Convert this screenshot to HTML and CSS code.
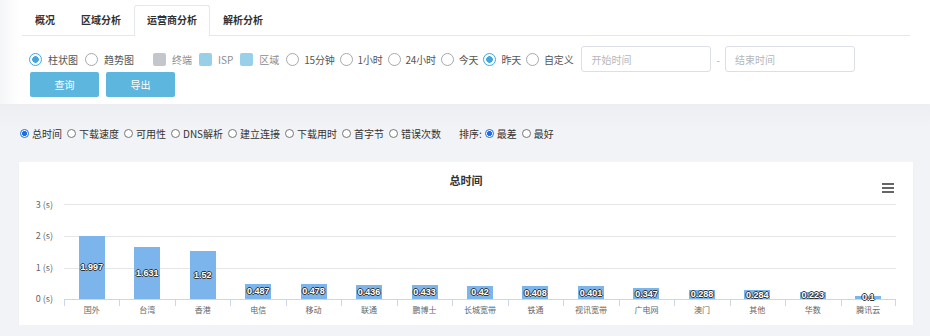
FILE: index.html
```html
<!DOCTYPE html>
<html lang="zh-CN">
<head>
    <meta charset="UTF-8">
    <title>运营商分析</title>
    <link rel="stylesheet" href="styles.css">
</head>
<body>
    <div class="top">
        <div class="tabs">
            <div class="tab">概况</div>
            <div class="tab">区域分析</div>
            <div class="tab active">运营商分析</div>
            <div class="tab">解析分析</div>
        </div>
        <div class="filters">
            <label class="opt"><span class="radio on"></span>柱状图</label>
            <label class="opt"><span class="radio"></span>趋势图</label>
            <label class="opt legend first"><span class="box grey"></span>终端</label>
            <label class="opt legend"><span class="box"></span>ISP</label>
            <label class="opt legend"><span class="box"></span>区域</label>
            <label class="opt time"><span class="radio"></span>15分钟</label>
            <label class="opt time"><span class="radio"></span>1小时</label>
            <label class="opt time"><span class="radio"></span>24小时</label>
            <label class="opt time"><span class="radio"></span>今天</label>
            <label class="opt time"><span class="radio on"></span>昨天</label>
            <label class="opt time last"><span class="radio"></span>自定义</label>
            <input class="date" type="text" placeholder="开始时间">
            <span class="dash">-</span>
            <input class="date" type="text" placeholder="结束时间">
        </div>
        <div class="actions">
            <button class="btn">查询</button>
            <button class="btn">导出</button>
        </div>
    </div>

    <div class="main">
        <div class="metrics">
            <label class="metric"><span class="dot on"></span>总时间</label>
            <label class="metric"><span class="dot"></span>下载速度</label>
            <label class="metric"><span class="dot"></span>可用性</label>
            <label class="metric"><span class="dot"></span>DNS解析</label>
            <label class="metric"><span class="dot"></span>建立连接</label>
            <label class="metric"><span class="dot"></span>下载用时</label>
            <label class="metric"><span class="dot"></span>首字节</label>
            <label class="metric"><span class="dot"></span>错误次数</label>
            <span class="sort-label">排序:</span>
            <label class="metric"><span class="dot on"></span>最差</label>
            <label class="metric"><span class="dot"></span>最好</label>
        </div>

        <div class="card">
            <div class="chart-title">总时间</div>
            <svg class="menu" width="12" height="10" viewBox="0 0 12 10">
                <rect x="0" y="0" width="12" height="2" fill="#666"/>
                <rect x="0" y="4" width="12" height="2" fill="#666"/>
                <rect x="0" y="8" width="12" height="2" fill="#666"/>
            </svg>
            <div class="chart">
                <div class="yaxis">
                    <div class="ylabel">3 (s)</div>
                    <div class="ylabel">2 (s)</div>
                    <div class="ylabel">1 (s)</div>
                    <div class="ylabel">0 (s)</div>
                </div>
                <div class="plot">
                    <div class="col"><div class="bar" style="height: 63.2px;"><span class="val">1.997</span></div></div>
                    <div class="col"><div class="bar" style="height: 51.7px;"><span class="val">1.631</span></div></div>
                    <div class="col"><div class="bar" style="height: 48.1px;"><span class="val">1.52</span></div></div>
                    <div class="col"><div class="bar" style="height: 15.4px;"><span class="val">0.487</span></div></div>
                    <div class="col"><div class="bar" style="height: 15.1px;"><span class="val">0.478</span></div></div>
                    <div class="col"><div class="bar" style="height: 13.8px;"><span class="val">0.436</span></div></div>
                    <div class="col"><div class="bar" style="height: 13.7px;"><span class="val">0.433</span></div></div>
                    <div class="col"><div class="bar" style="height: 13.3px;"><span class="val">0.42</span></div></div>
                    <div class="col"><div class="bar" style="height: 12.9px;"><span class="val">0.408</span></div></div>
                    <div class="col"><div class="bar" style="height: 12.7px;"><span class="val">0.401</span></div></div>
                    <div class="col"><div class="bar" style="height: 11px;"><span class="val">0.347</span></div></div>
                    <div class="col"><div class="bar" style="height: 9.1px;"><span class="val">0.288</span></div></div>
                    <div class="col"><div class="bar" style="height: 9px;"><span class="val">0.284</span></div></div>
                    <div class="col"><div class="bar" style="height: 7.1px;"><span class="val">0.223</span></div></div>
                    <div class="col"><div class="bar" style="height: 3.2px;"><span class="val">0.1</span></div></div>
                </div>
                <div></div>
                <div class="xaxis">
                    <div class="xl">国外</div>
                    <div class="xl">台湾</div>
                    <div class="xl">香港</div>
                    <div class="xl">电信</div>
                    <div class="xl">移动</div>
                    <div class="xl">联通</div>
                    <div class="xl">鹏博士</div>
                    <div class="xl">长城宽带</div>
                    <div class="xl">铁通</div>
                    <div class="xl">视讯宽带</div>
                    <div class="xl">广电网</div>
                    <div class="xl">澳门</div>
                    <div class="xl">其他</div>
                    <div class="xl">华数</div>
                    <div class="xl">腾讯云</div>
                </div>
            </div>
        </div>
    </div>
</body>
</html>
```

FILE: styles.css
```css
body {
    margin: 0;
    font-family: "Noto Sans CJK SC", "Noto Sans", sans-serif;
    background-color: #f2f3f6;
    color: #333;
}

/* barra superior */
.top {
    height: 104px;
    box-sizing: border-box;
    padding: 5px 20px 7px 22px;
    background: linear-gradient(to right, #f5f6f8, #fff 20px);
}

.tabs {
    display: flex;
    border-bottom: 1px solid #e4e7ed;
}

.tab {
    height: 31px;
    box-sizing: border-box;
    margin-bottom: -1px;
    padding: 0 12px;
    line-height: 28px;
    border: 1px solid transparent;
    border-bottom: none;
    font-size: 10px;
    font-weight: bold;
    color: #303133;
}

.tab.active {
    background-color: white;
    border-color: #e4e7ed;
    border-radius: 3px 3px 0 0;
}

.filters {
    display: flex;
    align-items: center;
    height: 26px;
    margin-top: 10px;
    padding-left: 7px;
    font-size: 10px;
    color: #555;
}

.opt {
    display: flex;
    align-items: center;
    gap: 6px;
    margin-right: 7px;
}

.opt.time {
    gap: 5px;
    margin-right: 5px;
    letter-spacing: -0.2px;
}

.opt.last {
    margin-right: 8px;
}

.opt.legend {
    color: #8a8d92;
}

.opt.first {
    margin-left: 12px;
}

.radio {
    width: 13px;
    height: 13px;
    box-sizing: border-box;
    border: 1px solid #a3a9b0;
    border-radius: 50%;
}

.radio.on {
    border: 1.5px solid #45a5d8;
    background: radial-gradient(circle, #45a5d8 3px, #fff 3.6px);
}

.box {
    width: 13px;
    height: 13px;
    border-radius: 2px;
    background-color: #98cfe9;
}

.box.grey {
    background-color: #c3c7cb;
}

.date {
    width: 130px;
    height: 26px;
    box-sizing: border-box;
    padding: 0 9px;
    border: 1px solid #dcdfe6;
    border-radius: 3px;
    font-family: inherit;
    font-size: 10px;
    outline: none;
}

.date::placeholder {
    color: #b4b7bc;
}

.dash {
    margin: 0 5px;
    color: #aaa;
}

.actions {
    display: flex;
    gap: 7px;
    padding-left: 8px;
}

.btn {
    width: 69px;
    height: 25px;
    border: none;
    border-radius: 2px;
    background-color: #5cb6de;
    color: white;
    font-family: inherit;
    font-size: 10px;
}

/* area cinza */
.main {
    padding: 22px 17px 0 19px;
    background: linear-gradient(#eceef1, #f2f3f6 24px);
}

.metrics {
    display: flex;
    align-items: center;
    height: 14px;
    padding-left: 1px;
    font-size: 10px;
    color: #333;
}

.metric {
    display: flex;
    align-items: center;
    gap: 3px;
    margin-right: 5px;
}

.dot {
    width: 9px;
    height: 9px;
    box-sizing: border-box;
    border: 1px solid #767676;
    border-radius: 50%;
    background-color: white;
}

.dot.on {
    border-color: #1b6fe4;
    background: radial-gradient(circle, #1b6fe4 2.2px, #fff 2.8px);
}

.sort-label {
    margin-left: 13px;
    margin-right: 3px;
}

.card {
    position: relative;
    height: 163px;
    margin-top: 22px;
    background-color: white;
    box-shadow: 0 1px 2px rgba(0,0,0,0.03);
}

.chart-title {
    padding-top: 11px;
    line-height: 14px;
    text-align: center;
    font-size: 11px;
    font-weight: bold;
    color: #333;
}

.menu {
    position: absolute;
    top: 21px;
    right: 19px;
}

.chart {
    display: grid;
    grid-template-columns: 45px 1fr;
    margin: 17px 17px 0 0;
}

.yaxis {
    height: 95px;
    display: flex;
    flex-direction: column;
    justify-content: space-between;
}

.ylabel {
    height: 0;
    display: flex;
    align-items: center;
    justify-content: flex-end;
    padding-right: 11px;
    font-size: 9px;
    color: #666;
}

.plot {
    height: 95px;
    display: flex;
    align-items: flex-end;
    border-bottom: 1px solid #ccd6eb;
    background:
        linear-gradient(#e6e6e6, #e6e6e6) 0 0 / 100% 1px no-repeat,
        linear-gradient(#e6e6e6, #e6e6e6) 0 32px / 100% 1px no-repeat,
        linear-gradient(#e6e6e6, #e6e6e6) 0 64px / 100% 1px no-repeat;
}

.col {
    flex: 1;
    height: 100%;
    display: flex;
    justify-content: center;
    align-items: flex-end;
}

.bar {
    position: relative;
    width: 26px;
    background-color: #7cb5ec;
}

.val {
    position: absolute;
    left: 50%;
    top: 50%;
    transform: translate(-50%, -50%);
    font-family: "Liberation Sans", Arial, sans-serif;
    font-size: 9px;
    font-weight: bold;
    line-height: 10px;
    color: white;
    white-space: nowrap;
    text-shadow: -1px 0 #333, 1px 0 #333, 0 -1px #333, 0 1px #333;
}

.xaxis {
    display: flex;
}

.xl {
    flex: 1;
    padding-top: 4px;
    line-height: 12px;
    text-align: center;
    font-size: 8px;
    color: #666;
    background: linear-gradient(#ccd6eb, #ccd6eb) left top / 1px 6px no-repeat;
}

.xl:last-child {
    background:
        linear-gradient(#ccd6eb, #ccd6eb) left top / 1px 6px no-repeat,
        linear-gradient(#ccd6eb, #ccd6eb) right top / 1px 6px no-repeat;
}
```
